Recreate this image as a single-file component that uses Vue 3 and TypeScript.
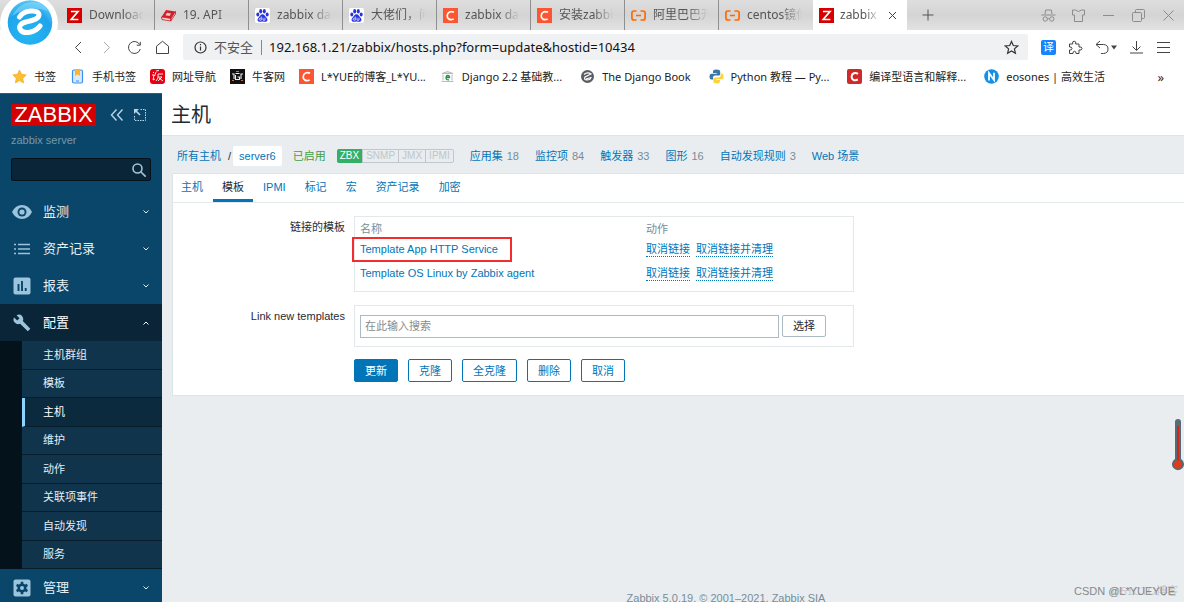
<script setup lang="ts">
import { ref } from 'vue'

interface Tab { title: string; icon: string; active?: boolean }
interface Bookmark { title: string; icon: string }
interface Counter { name: string; count?: number }

const tabs: Tab[] = [
  { title: 'Download', icon: 'zabbix' },
  { title: '19. API', icon: 'book' },
  { title: 'zabbix dashboard', icon: 'paw' },
  { title: '大佬们，问一下', icon: 'paw' },
  { title: 'zabbix dashboard', icon: 'csdn' },
  { title: '安装zabbix', icon: 'csdn' },
  { title: '阿里巴巴开源', icon: 'aliyun' },
  { title: 'centos镜像', icon: 'aliyun' },
  { title: 'zabbix', icon: 'zabbix', active: true },
]

const bookmarks: Bookmark[] = [
  { title: '书签', icon: 'star' },
  { title: '手机书签', icon: 'phone' },
  { title: '网址导航', icon: 'nav' },
  { title: '牛客网', icon: 'nowcoder' },
  { title: 'L*YUE的博客_L*YU...', icon: 'csdn' },
  { title: 'Django 2.2 基础教...', icon: 'temple' },
  { title: 'The Django Book', icon: 'globe' },
  { title: 'Python 教程 — Py...', icon: 'python' },
  { title: '编译型语言和解释...', icon: 'csdn2' },
  { title: 'eosones | 高效生活', icon: 'nblue' },
]

const submenu = ['主机群组', '模板', '主机', '维护', '动作', '关联项事件', '自动发现', '服务']
const counters: Counter[] = [
  { name: '应用集', count: 18 },
  { name: '监控项', count: 84 },
  { name: '触发器', count: 33 },
  { name: '图形', count: 16 },
  { name: '自动发现规则', count: 3 },
  { name: 'Web 场景' },
]
const formTabs = ['主机', '模板', 'IPMI', '标记', '宏', '资产记录', '加密']
const templates = ['Template App HTTP Service', 'Template OS Linux by Zabbix agent']
const actions = ['更新', '克隆', '全克隆', '删除', '取消']

const url = ref('192.168.1.21/zabbix/hosts.php?form=update&hostid=10434')
const search = ref('')
const query = ref('')
</script>

<template>
  <div class="window">
    <svg class="defs" width="0" height="0" aria-hidden="true">
      <symbol id="zabbix" viewBox="0 0 15 15"><rect width="15" height="15" fill="#d40000" /><path d="M4 3.5h7L4.2 11.5H11.4" fill="none" stroke="#fff" stroke-width="1.7" /></symbol>
      <symbol id="book" viewBox="0 0 15 15"><path d="M5 2L14.5 3.5 10 10.500.5 9z" fill="#d3202a" /><path d="M.5 9L10 10.500 9.600 13 1 11.500zM10 10.500L14.500 3.500V6L9.600 13z" fill="#f3dada" stroke="#c8141e" stroke-width=".8" /><path d="M6 4.800l4 .7-1.500 2.500-4-.7z" fill="#f6c9c9" /></symbol>
      <symbol id="paw" viewBox="0 0 15 15"><rect width="15" height="15" rx="2" fill="#fff" /><g fill="#2932e1"><ellipse cx="2.800" cy="6.500" rx="1.500" ry="2" /><ellipse cx="5.700" cy="3.200" rx="1.500" ry="2.200" /><ellipse cx="9.300" cy="3.200" rx="1.500" ry="2.200" /><ellipse cx="12.200" cy="6.500" rx="1.500" ry="2" /><path d="M7.500 6.300c2 0 2.500 2 4 3.400 1.600 1.500 1 4-1 4-1 0-2-.3-3-.3s-2 .3-3 .3c-2 0-2.600-2.500-1-4 1.500-1.400 2-3.400 4-3.400z" /></g><path d="M6.300 8.500v3.700H5.100a.9.9 0 010-2h1M8 9.700v2.500h2V9.700" fill="none" stroke="#fff" stroke-width=".7" /></symbol>
      <symbol id="csdn" viewBox="0 0 15 15"><rect width="15" height="15" fill="#fc5531" /><path d="M11 4.300C8 2.600 4.500 4 4.200 7.500s2.800 5 6.500 3.500" fill="none" stroke="#fff" stroke-width="1.700" /></symbol>
      <symbol id="csdn2" viewBox="0 0 15 15"><rect width="15" height="15" rx="2" fill="#cf2a27" /><path d="M11 4.800C8 3 4.800 4.300 4.600 7.500s2.700 4.700 6.200 3" fill="none" stroke="#fff" stroke-width="2" /></symbol>
      <symbol id="aliyun" viewBox="0 0 15 15"><path d="M5.500 3H3Q.9 3 .9 5v5q0 2 2.100 2h2.500M9.500 3H12q2.100 0 2.100 2v5q0 2-2.100 2H9.500M5 7.500h5" fill="none" stroke="#ff6a00" stroke-width="1.700" /></symbol>
      <symbol id="star" viewBox="0 0 15 15"><path d="M7.500 1l2 4.300 4.700.6-3.400 3.300.8 4.700-4.100-2.300-4.100 2.300.8-4.700L.8 5.900l4.700-.6z" fill="#fbc02d" stroke="#f0a92c" stroke-width=".7" /></symbol>
      <symbol id="phone" viewBox="0 0 15 15"><rect x="2.500" y="1" width="10" height="13" rx="1.500" fill="#d9eaff" stroke="#3d8ff0" stroke-width="1.200" /><path d="M5 0h5v7L7.500 5.200 5 7z" fill="#f9b62b" /><path d="M6 12h3" stroke="#3d8ff0" /></symbol>
      <symbol id="nav" viewBox="0 0 15 15"><rect width="15" height="15" rx="3" fill="#e60012" /><path d="M3 3l1 1M2 6h2l-1 5 2-1M6 3L4.500 7M8 5h5M8 5v4l-2 3M8 8h4l-4 4M9 9l4 3M6 2l3-.5" fill="none" stroke="#fff" stroke-width=".9" /></symbol>
      <symbol id="nowcoder" viewBox="0 0 15 15"><rect width="15" height="15" fill="#111" /><path d="M2 5h2v5M13 5h-2v5M5.500 4.500h4M5.500 6v4.500h4V8H7.500" fill="none" stroke="#eee" stroke-width="1.100" /><path d="M6 2.500h3M2 11.500h2M11 11.500h2" stroke="#d56a36" /></symbol>
      <symbol id="temple" viewBox="0 0 15 15"><path d="M2 4.500l5.500-2L13 4.500zM3 5.500v6M12 5.500v6M1.500 12.500h12" fill="#ddd" stroke="#bbb" /><path d="M6 8.500h3.500q0-2-1.700-2T6 8.800t3 2" fill="none" stroke="#23914b" stroke-width="1.300" /></symbol>
      <symbol id="globe" viewBox="0 0 15 15"><circle cx="7.500" cy="7.500" r="6.500" fill="#5a5d61" /><path d="M4 5.500q3.500-3 7-.5L5 8q-1.500 3 2 3t4-2.500L6 10" fill="none" stroke="#fff" stroke-width="1.200" /></symbol>
      <symbol id="python" viewBox="0 0 15 15"><path d="M7.400.5c-3 0-3.400 1-3.400 2.200V4h3.700v.7H2.500C1.200 4.700.5 5.800.5 7.500s.7 3 1.800 3H4V8.800c0-1.300 1-2.200 2.200-2.200h3.300c1 0 1.700-.8 1.700-1.700V2.700C11.200 1.200 10 .5 7.400.5z" fill="#3b78a8" /><path d="M7.600 14.500c3 0 3.400-1 3.400-2.200V11H7.300v-.7h5.200c1.300 0 2-1.100 2-2.800s-.7-3-1.800-3H11.700v1.700c0 1.300-1 2.200-2.200 2.200H6c-1 0-1.700.8-1.700 1.700v2.200c0 1.500 1 2.200 3.300 2.200z" fill="#fbd23f" /></symbol>
      <symbol id="nblue" viewBox="0 0 15 15"><circle cx="7.500" cy="7.500" r="7.300" fill="#1490e8" /><path d="M5 11.500V4L10 11V3.700" fill="none" stroke="#fff" stroke-width="1.800" /></symbol>
    </svg>

    <header class="browser">
      <svg class="brand" viewBox="0 0 60 52" aria-label="浏览器">
        <defs><radialGradient id="orb" cx="45%" cy="75%" r="75%"><stop offset="0" stop-color="#25b8f4" /><stop offset=".7" stop-color="#1fa4ea" /><stop offset="1" stop-color="#59c8f5" /></radialGradient></defs>
        <circle cx="29" cy="23" r="29" fill="#fff" />
        <circle cx="30" cy="22.500" r="22.300" fill="url(#orb)" />
        <path d="M12 16Q20 1 35 2q9 1 13 9-18-7-36 5z" fill="#8edcf9" opacity=".55" />
        <path d="M19.500 17C24 10 38 9 39 14.500 39.500 19 32 20.500 26 22S18 27 21 30.500s14 2.500 19-4.500" fill="none" stroke="#fff" stroke-width="5" stroke-linecap="round" />
      </svg>
      <nav class="tabs" aria-label="标签页">
        <button v-for="(t, i) in tabs" :key="i" class="tab" :class="{ active: t.active }">
          <svg class="fav"><use :href="'#' + t.icon" /></svg>
          <span class="tab-title">{{ t.title }}</span>
          <svg v-if="t.active" class="close" viewBox="0 0 9 9"><path d="M1 1l7 7M8 1L1 8" /></svg>
        </button>
        <button class="new-tab" aria-label="新标签页"><svg viewBox="0 0 12 12"><path d="M6 .5v11M.5 6h11" /></svg></button>
        <div class="controls">
          <button aria-label="隐身"><svg viewBox="0 0 15 15"><path d="M4 6l.7-4h5.600l.7 4M.5 7h14M6.500 11q1-.8 2 0" /><circle cx="4.200" cy="11" r="2.200" /><circle cx="10.800" cy="11" r="2.200" /></svg></button>
          <button aria-label="皮肤"><svg viewBox="0 0 15 15"><path d="M1.500 2h3q3 3 6 0h3v5h-2v6.500h-8V7h-2z" /></svg></button>
          <button aria-label="最小化"><svg viewBox="0 0 15 15"><path d="M2 7.500h11" /></svg></button>
          <button aria-label="还原"><svg viewBox="0 0 15 15"><rect x="1.500" y="4.500" width="9" height="9" rx="1" /><path d="M4.500 4V2.500q0-1 1-1h7q1 0 1 1v7q0 1-1 1H11" /></svg></button>
          <button aria-label="关闭"><svg viewBox="0 0 15 15"><path d="M2.500 2.500l10 10M12.500 2.500l-10 10" /></svg></button>
        </div>
      </nav>

      <div class="toolbar">
        <div class="history">
          <button aria-label="后退"><svg viewBox="0 0 15 15"><path d="M10 2L4.500 7.500 10 13" /></svg></button>
          <button aria-label="前进" class="off"><svg viewBox="0 0 15 15"><path d="M5 2l5.500 5.500L5 13" /></svg></button>
          <button aria-label="刷新"><svg viewBox="0 0 15 15"><path d="M12.700 4.500A6 6 0 1013.300 9M13.300 1.800v3.400H9.800" /></svg></button>
          <button aria-label="主页"><svg viewBox="0 0 15 15"><path d="M1.500 6.200L7.500 1.300l6 4.900v7.300h-12z" /></svg></button>
        </div>
        <label class="address">
          <svg class="info" viewBox="0 0 15 15"><circle cx="7.500" cy="7.500" r="5.500" /><path d="M7.500 6.500v4M7.500 4v1.300" /></svg>
          <span class="insecure">不安全</span>
          <input v-model="url" type="text" aria-label="地址" />
          <svg class="fav-star" viewBox="0 0 15 15"><path d="M7.500 1.500l1.800 4 4.400.5-3.300 2.900 1 4.300-3.900-2.300-3.900 2.300 1-4.300L1.300 6l4.400-.5z" /></svg>
        </label>
        <div class="tools">
          <button class="translate" aria-label="翻译">译</button>
          <button aria-label="扩展"><svg viewBox="0 0 15 15"><path d="M1.500 4h3.200q-.7-2.800 1.500-2.800T7.700 4H11v3q3-.5 3 1.500T11 10v3.500H8q.3-2.200-1.500-2.200T5 13.500H1.500V10q2.500.3 2.500-1.500T1.500 7z" /></svg></button>
          <button aria-label="恢复" class="undo"><svg viewBox="0 0 22 15"><path d="M5 1L1 4.500 5 8M1 4.500h7.500q4.500.2 4.500 4.500t-4.500 4.500H6" /><path d="M16 5.500h6L19 9.500z" class="caret" /></svg></button>
          <button aria-label="下载"><svg viewBox="0 0 15 15"><path d="M7.500 1v9M3.500 6.500l4 4 4-4M1 13h13" /></svg></button>
          <button aria-label="菜单"><svg viewBox="0 0 15 15"><path d="M1 2.500h13M1 7.500h13M1 12.500h13" /></svg></button>
        </div>
      </div>

      <nav class="bookmarks" aria-label="书签">
        <a v-for="b in bookmarks" :key="b.title" href="#"><svg class="fav"><use :href="'#' + b.icon" /></svg><span>{{ b.title }}</span></a>
        <button class="more" aria-label="更多书签">»</button>
      </nav>
    </header>

    <div class="app">
      <aside class="sidebar">
        <div class="logo-row">
          <a href="#" class="logo">ZABBIX</a>
          <button aria-label="收起"><svg viewBox="0 0 14 14"><path d="M6.500 1.500L1.500 7l5 5.500M12.500 1.500L7.500 7l5 5.500" stroke-width="1.400" /></svg></button>
          <button aria-label="隐藏"><svg viewBox="0 0 14 14"><path d="M7.500 1.500h5v11h-11v-5" stroke-dasharray="1.500 1" /><path d="M7 7L3 3" stroke-width="1.700" /><path d="M1 1h5L1 6z" fill="currentColor" stroke="none" /></svg></button>
        </div>
        <div class="server">zabbix server</div>
        <label class="search"><input v-model="search" type="text" aria-label="搜索" /><svg viewBox="0 0 14 14"><circle cx="5.500" cy="5.500" r="4.500" /><path d="M8.700 8.700l5 5" /></svg></label>
        <nav class="menu" aria-label="主菜单">
          <button class="item"><svg class="mi" viewBox="0 0 20 18"><path d="M0 9Q3.500 2 10 2t10 7q-3.500 7-10 7T0 9z" fill="currentColor" /><circle cx="10" cy="9" r="4.500" fill="#0a466a" /><circle cx="10" cy="9" r="2.600" fill="currentColor" /></svg><span>监测</span><svg class="chev" viewBox="0 0 8 8"><path d="M1.500 2.500L4 5l2.500-2.500" /></svg></button>
          <button class="item"><svg class="mi" viewBox="0 0 20 18"><path d="M2 4.500h2M6 4.500h12M2 9h2M6 9h12M2 13.500h2M6 13.500h12" stroke="currentColor" stroke-width="1.600" /></svg><span>资产记录</span><svg class="chev" viewBox="0 0 8 8"><path d="M1.500 2.500L4 5l2.500-2.500" /></svg></button>
          <button class="item"><svg class="mi" viewBox="0 0 20 18"><rect x="1.500" y=".5" width="17" height="17" rx="2" fill="currentColor" /><path d="M6.500 7v7M10 4v10M13.700 11v3" stroke="#0a466a" stroke-width="1.900" /></svg><span>报表</span><svg class="chev" viewBox="0 0 8 8"><path d="M1.500 2.500L4 5l2.500-2.500" /></svg></button>
          <button class="item open"><svg class="mi" viewBox="0 0 20 18"><path d="M2.200 3.500l3 3 2.300-2.200-3-3Q8-.5 10 2t.8 5l7.500 7.700-2.500 2.500-7.700-7.500Q5 11 2.700 8.500T2.200 3.500z" fill="currentColor" /></svg><span>配置</span><svg class="chev" viewBox="0 0 8 8"><path d="M1.500 5.500L4 3l2.500 2.500" /></svg></button>
          <div class="submenu"><a v-for="s in submenu" :key="s" href="#" :class="{ current: s === '主机' }">{{ s }}</a></div>
          <button class="item"><svg class="mi" viewBox="0 0 20 18"><rect x="1.500" y=".5" width="17" height="17" rx="2" fill="currentColor" /><circle cx="10" cy="9" r="3.300" fill="none" stroke="#0a466a" stroke-width="2.600" /><path d="M10 2.800v2.500M10 12.700v2.500M4.600 5.900l2.200 1.300M13.200 10.800l2.200 1.300M4.600 12.100l2.200-1.300M13.200 7.200l2.200-1.300" stroke="#0a466a" stroke-width="2.600" /></svg><span>管理</span><svg class="chev" viewBox="0 0 8 8"><path d="M1.500 2.500L4 5l2.500-2.500" /></svg></button>
        </nav>
      </aside>

      <main class="content">
        <div class="title"><h1>主机</h1></div>
        <nav class="crumbs" aria-label="主机导航">
          <a href="#">所有主机</a><span class="slash">/</span><a href="#" class="host">server6</a>
          <span class="enabled">已启用</span>
          <span class="badges"><span class="on">ZBX</span><span>SNMP</span><span>JMX</span><span>IPMI</span></span>
          <span v-for="c in counters" :key="c.name" class="counter"><a href="#">{{ c.name }}</a><span v-if="c.count" class="count">{{ c.count }}</span></span>
        </nav>

        <section class="panel">
          <nav class="form-tabs"><a v-for="f in formTabs" :key="f" href="#" :class="{ selected: f === '模板' }">{{ f }}</a></nav>
          <form class="form" @submit.prevent>
            <span id="linked" class="label">链接的模板</span>
            <div class="box linked">
              <table aria-labelledby="linked">
                <thead><tr><th class="name">名称</th><th>动作</th></tr></thead>
                <tbody>
                  <tr v-for="(t, i) in templates" :key="t">
                    <td><a href="#" :class="{ marked: i === 0 }">{{ t }}</a></td>
                    <td><div class="acts"><button type="button" class="dotted">取消链接</button><button type="button" class="dotted">取消链接并清理</button></div></td>
                  </tr>
                </tbody>
              </table>
            </div>
            <label class="label" for="newtpl">Link new templates</label>
            <div class="box picker">
              <input id="newtpl" v-model="query" type="text" placeholder="在此输入搜索" />
              <button type="button" class="btn grey">选择</button>
            </div>
            <div class="buttons"><button v-for="(a, i) in actions" :key="a" type="button" class="btn" :class="{ primary: i === 0 }">{{ a }}</button></div>
          </form>
        </section>

        <footer>Zabbix 5.0.19. © 2001–2021, Zabbix SIA</footer>
      </main>
      <svg class="thermo" viewBox="0 0 12 54"><path d="M3 4a3 3 0 016 0v37a6 6 0 11-6 0z" fill="#566b77" /><path d="M6 8v36" stroke="#d32713" stroke-width="2" /><circle cx="6" cy="46.500" r="4" fill="#e03a17" /></svg>
      <div class="mark faint">@51CTO博客</div>
      <div class="mark">CSDN @L*YUEYUE</div>
    </div>
  </div>
</template>

<style>
body { background: #e9edf0; overflow: hidden; }
</style>

<style scoped>
* { box-sizing: border-box; }
.window { display: flex; flex-direction: column; height: 100vh; overflow: hidden; font: 11px/16px "Liberation Sans", "Noto Sans CJK SC", sans-serif; color: #1f2c33; }
.defs { position: absolute; }
button { font: inherit; color: inherit; background: none; border: 0; padding: 0; }
a { color: #0275b8; text-decoration: none; }
svg { display: block; flex: none; }
button svg { fill: none; stroke: currentColor; }

.browser { position: relative; flex: none; background: #fff; font-family: "Noto Sans", "Noto Sans CJK SC", sans-serif; }
.brand { position: absolute; left: 0; top: 0; width: 60px; height: 52px; z-index: 1; }
.tabs { display: flex; height: 30px; padding-left: 61px; background: linear-gradient(#dedede, #d4d4d4 50%, #e2e2e2); }
.tab { position: relative; display: flex; align-items: center; gap: 7px; flex: 0 1 94px; min-width: 0; padding: 0 8px 0 6px; border-right: 1px solid #8f8f8f; color: #555; text-align: left; }
.tab.active { background: #fff; border: 0; padding-right: 10px; gap: 6px; }
.tab:nth-child(8) { border-color: transparent; }
.tab-title { flex: 1; overflow: hidden; white-space: nowrap; font-size: 12px; mask-image: linear-gradient(to right, #000 60%, transparent 96%); }
.fav { width: 15px; height: 15px; stroke: none; }
.close { width: 9px; height: 9px; color: #444; }
.new-tab { width: 42px; display: grid; place-items: center; color: #555; }
.new-tab svg { width: 12px; height: 12px; }
.controls { margin-left: auto; display: flex; align-items: center; gap: 15px; padding-right: 8px; color: #8c8c8c; }
.controls svg { width: 15px; height: 15px; }

.toolbar { display: flex; align-items: center; height: 34px; padding: 0 13px 0 71px; }
.history { display: flex; gap: 13px; width: 112px; color: #444; }
.history svg, .tools svg { width: 15px; height: 15px; }
.off { color: #aaa; }
.address { flex: 1; display: flex; align-items: center; height: 26px; padding: 0 9px 0 10px; background: #f0f1f3; border-radius: 2px; font-size: 13px; }
.address svg { width: 15px; height: 15px; fill: none; stroke: #333; stroke-width: 1.2; }
.insecure { margin-left: 6px; padding-right: 8px; border-right: 1px solid #888; line-height: 15px; color: #555; }
.address input { flex: 1; min-width: 0; border: 0; outline: 0; padding: 0 0 0 7px; background: none; font: inherit; color: #111; }
.tools { display: flex; align-items: center; gap: 12px; padding-left: 13px; color: #444; }
.tools .undo svg { width: 22px; }
.caret { fill: #444; stroke: none; }
.translate { width: 15px; height: 15px; background: #1684fc; border-radius: 2px; color: #fff; font-size: 11px; line-height: 14px; }

.bookmarks { display: flex; align-items: center; gap: 14px; height: 29px; padding: 0 20px 4px 12px; }
.bookmarks a { display: flex; align-items: center; gap: 7px; color: #222; white-space: nowrap; }
.bookmarks a:nth-child(n + 7) { margin-left: 4px; }
.more { margin-left: auto; font-size: 13px; }

.app { position: relative; flex: 1; min-height: 0; display: flex; }
.sidebar { width: 162px; flex: none; background: #0a466a; border-top: 1px solid #2a5f7e; color: #e3eef5; }
.logo-row { display: flex; align-items: center; gap: 9px; padding: 10px 0 0 11px; color: #b9d5e6; }
.logo { width: 85px; margin-right: 5px; background: #d40000; color: #fff; font-size: 22px; line-height: 22px; text-align: center; }
.logo-row svg { width: 14px; height: 14px; }
.server { margin: 6px 11px 0; color: #7896a9; }
.search { display: flex; align-items: center; height: 23px; margin: 10px 11px 12px; padding: 0 4px; background: #0a2537; border: 1px solid #04121c; border-radius: 2px; }
.search input { flex: 1; min-width: 0; border: 0; outline: 0; background: none; color: #fff; font: inherit; }
.search svg { width: 14px; height: 14px; fill: none; stroke: #a3c3d6; stroke-width: 1.6; }
.item { display: flex; align-items: center; width: 100%; height: 37px; padding: 0 12px; gap: 11px; font-size: 13px; text-align: left; }
.item span { flex: 1; }
.mi { width: 20px; height: 18px; color: #9cc4dc; stroke: none; }
.open { background: #0a2537; color: #fff; }
.chev { width: 8px; height: 8px; }
.submenu { display: grid; grid-template-rows: repeat(8, 1fr); height: 228px; padding-left: 22px; background: #04121b; }
.submenu a { display: flex; align-items: center; padding-left: 21px; background: #0f344c; color: #e3eef5; border-bottom: 1px solid #071d2b; }
.submenu .current { background: #0c2a3e; border-left: 3px solid #8cd3ff; padding-left: 18px; color: #fff; }

.content { flex: 1; min-width: 0; display: flex; flex-direction: column; background: #e9edf0; }
.title { height: 43px; padding: 8px 9px 0; background: #fff; border-bottom: 1px solid #dfe4e7; }
h1 { margin: 0; font-size: 20px; line-height: 28px; font-weight: 400; }
.crumbs { display: flex; align-items: center; padding: 10px 15px 7px; color: #768d99; white-space: nowrap; line-height: 20px; }
.slash { margin: 0 2px 0 7px; color: #1f2c33; }
.host { padding: 0 6px; background: #fff; border-radius: 2px; }
.enabled { margin-left: 11px; color: #429e47; }
.badges { display: flex; margin-left: 11px; font-size: 10px; line-height: 12px; color: #bdc6cb; border: 1px solid #c0c8cd; border-radius: 2px; }
.badges span { padding: 0 3px; border-left: 1px solid #c0c8cd; }
.badges .on { margin: -1px 0 -1px -1px; padding: 1px 3px; background: #34af67; color: #fff; border: 0; border-radius: 2px 0 0 2px; }
.counter { margin-left: 16px; }
.count { margin-left: 4px; }

.panel { margin-left: 10px; background: #fff; border: solid #dfe4e7; border-width: 1px 0 1px 1px; }
.form-tabs { display: flex; gap: 1px; height: 29px; border-bottom: 1px solid #e3e8ea; }
.form-tabs a { padding: 5px 9px 0 9px; }
.form-tabs a:first-child { padding-left: 8px; }
.form-tabs .selected { color: #1f2c33; border-bottom: 3px solid #0275b8; }
.form { display: grid; grid-template-columns: 172px minmax(0, 500px); column-gap: 9px; padding: 13px 0; }
.label { text-align: right; padding-top: 3px; }
.box { border: 1px solid #e3e8ea; }
.linked { height: 76px; margin-bottom: 13px; }
table { width: 100%; border-collapse: collapse; table-layout: fixed; }
th { height: 20px; padding: 0 5px; text-align: left; font-weight: 400; color: #768d99; vertical-align: bottom; }
.name { width: 286px; }
td { height: 24px; padding: 0 5px; }
.marked { position: relative; }
.marked::after { content: ""; position: absolute; inset: -6px -14px -7px -8px; border: 2px solid #f22d2d; }
.acts { display: flex; gap: 6px; }
.dotted { color: #0275b8; line-height: 14px; border-bottom: 1px dotted #0275b8; }
.picker { display: flex; align-items: center; gap: 3px; height: 42px; padding: 0 27px 0 5px; margin-bottom: 12px; }
.picker input { flex: 1; min-width: 0; height: 23px; padding: 0 4px; border: 1px solid #acbbc2; font: inherit; }
.picker input::placeholder { color: #8b8b8b; }
.buttons { grid-column: 2; display: flex; gap: 10px; }
.btn { height: 23px; padding: 0 10px; color: #0275b8; background: #fff; border: 1px solid #0275b8; border-radius: 2px; }
.primary { background: #0275b8; color: #fff; }
.grey { color: #1f2c33; border-color: #acbbc2; height: 22px; }
footer { margin: auto 0 -4px; text-align: center; color: #768d99; line-height: 16px; padding-left: 106px; }
.thermo { position: absolute; right: 0; top: 325px; width: 12px; height: 54px; }
.mark { position: absolute; right: 9px; bottom: 3px; font-size: 11px; line-height: 15px; color: #87898b; }
.faint { right: 6px; color: #c5c8ca; }
</style>
